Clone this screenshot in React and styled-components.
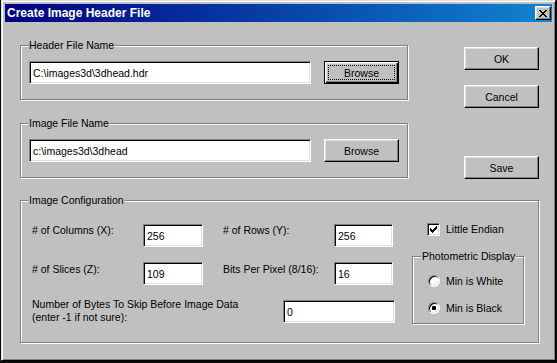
import styled, { createGlobalStyle } from "styled-components";

/* --- --- --- */

const FONT = `"Liberation Sans", Arial, sans-serif`;

const Global = createGlobalStyle`
  html, body {
    margin: 0;
    padding: 0;
    background: #0b0b0b;
  }
  body {
    width: 557px;
    height: 363px;
    overflow: hidden;
    font-family: ${FONT};
    font-size: 10.5px;
    color: #000;
  }
`;

const bevelOut = `
  border: 1px solid;
  border-color: #fff #000 #000 #fff;
  box-shadow: inset -1px -1px #808080, inset 1px 1px #dfdfdf;
`;

const bevelIn = `
  border: 1px solid;
  border-color: #808080 #fff #fff #808080;
  box-shadow: inset 1px 1px #000, inset -1px -1px #dfdfdf;
`;

const Window = styled.div`
  box-sizing: border-box;
  margin-left: 1px;
  width: 555px;
  height: 361px;
  padding: 3px;
  background: #c0c0c0;
  border: 1px solid;
  border-color: #dfdfdf #000 #000 #dfdfdf;
  box-shadow: inset 1px 1px #fff, inset -1px -1px #808080;
  display: flex;
  flex-direction: column;
`;

const TitleBar = styled.div`
  height: 18px;
  display: flex;
  align-items: center;
  padding: 0 1px 0 2px;
  background: linear-gradient(90deg, #000080, #1084d0);
  color: #fff;
  font-weight: bold;
  font-size: 12px;
`;

const CloseButton = styled.div`
  box-sizing: border-box;
  margin-left: auto;
  width: 16px;
  height: 14px;
  background: #c0c0c0;
  ${bevelOut}
  display: flex;
  align-items: center;
  justify-content: center;
`;

const Body = styled.div`
  padding: 23px 0 0 15px;
`;

const TopRow = styled.div`
  display: flex;
`;

const LeftCol = styled.div`
  width: 388px;
  display: flex;
  flex-direction: column;
  gap: 23px;
`;

const ButtonCol = styled.div`
  margin-left: 56px;
  padding-top: 2px;
  display: flex;
  flex-direction: column;
`;

const Group = styled.div`
  position: relative;
  box-sizing: border-box;
  width: ${(p) => p.$w}px;
  height: ${(p) => p.$h}px;
  border: 1px solid #808080;
  box-shadow: inset 1px 1px #fff, 1px 1px #fff;
`;

const Legend = styled.span`
  position: absolute;
  top: -7px;
  left: ${(p) => p.$left || 7}px;
  padding: 0 1px;
  line-height: 13px;
  background: #c0c0c0;
`;

const FileRow = styled.div`
  display: flex;
  gap: 13px;
  padding: 15px 0 0 8px;
`;

const Field = styled.input`
  box-sizing: border-box;
  width: ${(p) => p.$w}px;
  height: 23px;
  margin: 0;
  padding: 0 3px;
  background: #fff;
  ${bevelIn}
  font-family: ${FONT};
  font-size: 10.5px;
  color: #000;
  outline: none;
`;

const Button = styled.button`
  position: relative;
  box-sizing: border-box;
  width: 75px;
  height: 23px;
  margin: 0 0 ${(p) => p.$gap || 0}px 0;
  padding: 0;
  background: #c0c0c0;
  font-family: ${FONT};
  font-size: 10.5px;
  color: #000;
  ${(p) =>
    p.$default
      ? `
    border: 1px solid #000;
    box-shadow: inset 1px 1px #fff, inset -1px -1px #000, inset -2px -2px #808080, inset 2px 2px #dfdfdf;
    &::after {
      content: "";
      position: absolute;
      inset: 3px;
      border: 1px dotted #000;
    }
  `
      : bevelOut}
`;

const ConfigGroup = styled(Group)`
  margin-top: 21px;
  display: flex;
  padding: 23px 0 0 11px;
`;

const Fields = styled.div`
  width: 363px;
  display: flex;
  flex-direction: column;
  gap: 15px;
`;

const Row = styled.div`
  display: flex;
  align-items: flex-start;
`;

const Label = styled.div`
  width: ${(p) => p.$w}px;
  margin-left: ${(p) => p.$ml || 0}px;
  margin-top: ${(p) => p.$mt || 0}px;
  line-height: 13px;
`;

const Side = styled.div`
  margin: -1px 0 0 17px;
  display: flex;
  flex-direction: column;
`;

const CheckRow = styled.div`
  display: flex;
  align-items: center;
  gap: 6px;
  padding-left: 15px;
  line-height: 13px;
`;

const CheckBox = styled.span`
  box-sizing: border-box;
  width: 13px;
  height: 13px;
  background: #fff;
  ${bevelIn}
  display: flex;
  align-items: center;
  justify-content: center;
`;

const PhotoGroup = styled(Group)`
  margin-top: 20px;
  padding: 18px 0 0 15px;
  display: flex;
  flex-direction: column;
  gap: 15px;
`;

const RadioRow = styled.div`
  display: flex;
  align-items: center;
  gap: 6px;
  height: 12px;
  line-height: 13px;
`;

const RadioDot = styled.span`
  box-sizing: border-box;
  width: 12px;
  height: 12px;
  border-radius: 50%;
  background: #fff;
  border: 1px solid;
  border-color: #808080 #fff #fff #808080;
  box-shadow: inset 1px 1px #000, inset -1px -1px #dfdfdf;
  display: flex;
  align-items: center;
  justify-content: center;

  &::after {
    content: "";
    width: 4px;
    height: 4px;
    border-radius: 1px;
    background: ${(p) => (p.$on ? "#000" : "transparent")};
  }
`;

/* --- --- --- */

function Pixels({ rows, color = "#000" }) {
  const d = rows
    .map((r, y) =>
      r
        .split("")
        .map((c, x) => (c === "X" ? `M${x} ${y}h1v1h-1z` : ""))
        .join("")
    )
    .join("");
  return (
    <svg width={rows[0].length} height={rows.length} shapeRendering="crispEdges">
      <path d={d} fill={color} />
    </svg>
  );
}

const CROSS = ["XX....XX", ".XX..XX.", "..XXXX..", "...XX...", "..XXXX..", ".XX..XX.", "XX....XX"];
const TICK = ["......X", ".....XX", "X...XXX", "XX.XXX.", "XXXXX..", ".XXX...", "..X...."];

export default function App() {
  return (
    <>
      <Global />
      <Window>
        <TitleBar>
          Create Image Header File
          <CloseButton>
            <Pixels rows={CROSS} />
          </CloseButton>
        </TitleBar>
        <Body>
          <TopRow>
            <LeftCol>
              <Group $w={388} $h={55}>
                <Legend>Header File Name</Legend>
                <FileRow>
                  <Field $w={282} readOnly value="C:\images3d\3dhead.hdr" />
                  <Button $default>Browse</Button>
                </FileRow>
              </Group>
              <Group $w={388} $h={55}>
                <Legend>Image File Name</Legend>
                <FileRow>
                  <Field $w={282} readOnly value="c:\images3d\3dhead" />
                  <Button>Browse</Button>
                </FileRow>
              </Group>
            </LeftCol>
            <ButtonCol>
              <Button $gap={15}>OK</Button>
              <Button $gap={48}>Cancel</Button>
              <Button>Save</Button>
            </ButtonCol>
          </TopRow>

          <ConfigGroup $w={519} $h={143}>
            <Legend>Image Configuration</Legend>
            <Fields>
              <Row>
                <Label $w={111}># of Columns (X):</Label>
                <Field $w={60} readOnly value="256" />
                <Label $w={111} $ml={20}># of Rows (Y):</Label>
                <Field $w={59} readOnly value="256" />
              </Row>
              <Row>
                <Label $w={111} $mt={1}># of Slices (Z):</Label>
                <Field $w={60} readOnly value="109" />
                <Label $w={111} $ml={20} $mt={1}>Bits Per Pixel (8/16):</Label>
                <Field $w={59} readOnly value="16" />
              </Row>
              <Row>
                <Label $w={251} $mt={-2}>
                  Number of Bytes To Skip Before Image Data
                  <br />
                  (enter -1 if not sure):
                </Label>
                <Field $w={112} readOnly value="0" />
              </Row>
            </Fields>
            <Side>
              <CheckRow>
                <CheckBox>
                  <Pixels rows={TICK} />
                </CheckBox>
                Little Endian
              </CheckRow>
              <PhotoGroup $w={112} $h={68}>
                <Legend $left={8}>Photometric Display</Legend>
                <RadioRow>
                  <RadioDot />
                  Min is White
                </RadioRow>
                <RadioRow>
                  <RadioDot $on />
                  Min is Black
                </RadioRow>
              </PhotoGroup>
            </Side>
          </ConfigGroup>
        </Body>
      </Window>
    </>
  );
}
